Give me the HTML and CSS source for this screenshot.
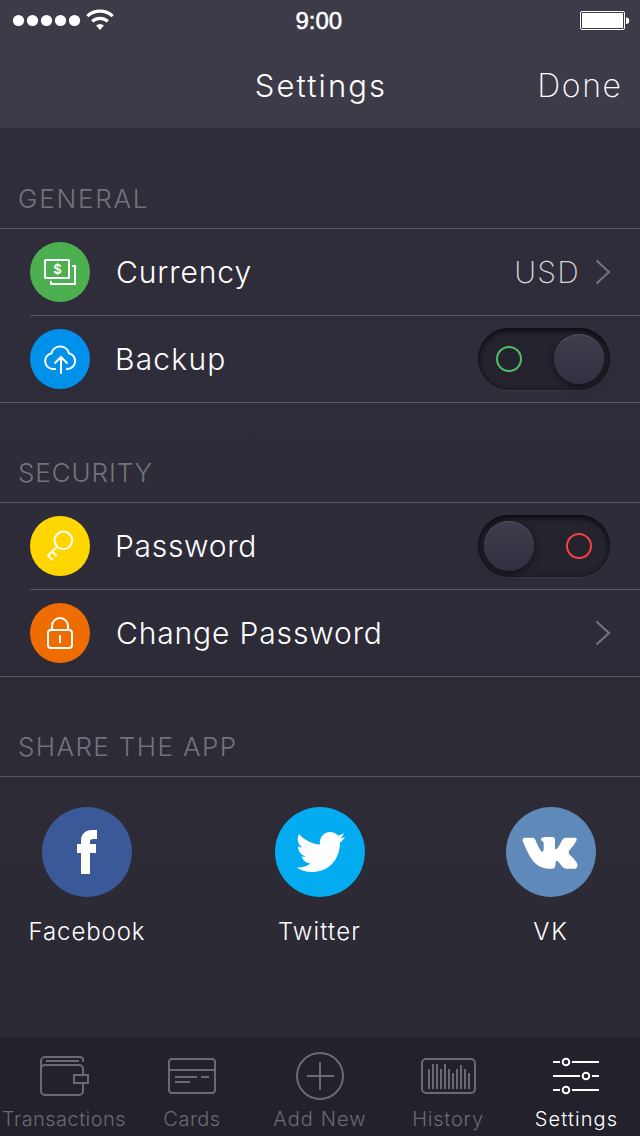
FILE: index.html
```html
<!DOCTYPE html>
<html lang="en">
<head>
<meta charset="utf-8">
<title>Settings</title>
<link rel="stylesheet" href="styles.css">
</head>
<body>
<div class="screen">
  <header class="header">
    <div class="status">
      <svg class="signal" width="108" height="24" viewBox="0 0 108 24" fill="#fff">
        <circle cx="6.5" cy="12.5" r="5.6"/><circle cx="20.5" cy="12.5" r="5.6"/><circle cx="34.5" cy="12.5" r="5.6"/><circle cx="48.5" cy="12.5" r="5.6"/><circle cx="62.5" cy="12.5" r="5.6"/>
        <g fill="none" stroke="#fff" stroke-width="3.2"><path d="M75.3 8.2a18.5 18.5 0 0 1 25.4 0"/><path d="M80.2 13.4a11.5 11.5 0 0 1 15.6 0"/></g>
        <path d="M84.1 17.4a5.8 5.8 0 0 1 7.8 0L88 22z"/>
      </svg>
      <span class="time">9:00</span>
      <svg class="battery" width="50" height="20" viewBox="0 0 50 20">
        <rect x=".5" y=".5" width="44" height="18" rx="1.5" fill="none" stroke="#fff"/>
        <rect x="2" y="2" width="41" height="15" rx=".5" fill="#fff"/>
        <path d="M46 6.500a3 3 0 0 1 0 6.500z" fill="#fff"/>
      </svg>
    </div>
    <div class="navbar">
      <h1 class="title">Settings</h1>
      <span class="done">Done</span>
    </div>
  </header>

  <main class="content">
    <section class="group">
      <h2 class="heading general">GENERAL</h2>
      <div class="row">
        <svg class="badge green" viewBox="0 0 60 60"><rect x="15" y="18" width="24" height="18" rx=".5"/><path d="M42 24h3v18H21v-3"/><text class="dollar" x="27.400" y="31.500">$</text></svg>
        <div class="cell">
          <span class="label currency">Currency</span>
          <span class="value">USD</span>
          <svg class="chevron" viewBox="0 0 16 26"><path d="M1.500 1.500 14 13 1.500 24.500"/></svg>
        </div>
      </div>
      <div class="row">
        <svg class="badge blue" viewBox="0 0 60 60"><path d="M26 40h-3.500A8 8 0 0 1 21.500 24.200a9 9 0 0 1 17.400 0A8 8 0 0 1 37.500 40H36M31 44.700V28M24.500 34.500 31 28l6.500 6.500"/></svg>
        <div class="cell">
          <span class="label backup">Backup</span>
          <span class="toggle on"><i class="ring"></i><i class="knob"></i></span>
        </div>
      </div>
    </section>

    <section class="group">
      <h2 class="heading security">SECURITY</h2>
      <div class="row">
        <svg class="badge yellow" viewBox="0 0 60 60"><circle cx="33.400" cy="24.400" r="8.800"/><path d="M27.200 30.600 18 39.400l4.700 4.700M22.300 35.500l4.200 4.500"/></svg>
        <div class="cell">
          <span class="label password">Password</span>
          <span class="toggle off"><i class="knob"></i><i class="ring"></i></span>
        </div>
      </div>
      <div class="row">
        <svg class="badge orange" viewBox="0 0 60 60"><rect x="18" y="27" width="24" height="18" rx="3"/><path d="M22 27v-4a8 8 0 0 1 16 0v4M30 32v8"/></svg>
        <div class="cell">
          <span class="label change">Change Password</span>
          <svg class="chevron" viewBox="0 0 16 26"><path d="M1.500 1.500 14 13 1.500 24.500"/></svg>
        </div>
      </div>
    </section>

    <section class="group">
      <h2 class="heading share">SHARE THE APP</h2>
      <div class="socials">
        <div class="social">
          <svg class="disc facebook" viewBox="0 0 90 90"><path d="M39 67V46h-4v-9h4v-3c0-7 4-11 11-11h5v9h-4c-2 0-3 1-3 3v2h6v9h-6v21z"/></svg>
          <span class="name fb-name">Facebook</span>
        </div>
        <div class="social">
          <svg class="disc twitter" viewBox="0 0 90 90"><path d="M24 27c5 6 13 10 21 10.500-1-7 4-12.500 10-12.500 3.500 0 6 1.500 8 3.500 2-.3 4-1.200 6-2.500-.8 2.300-2 3.800-3.500 5 1.500 0 3-.4 4.500-1-1 2-2.700 3.700-5 5.500C65 51 55 65 37.500 65 31.500 65 26 63.500 21.700 60.500c5.300.4 10-1 14-4-4.500-.4-8-3-9-7 1.500.2 3 .2 4.200-.2-5-1.300-8-5-7.800-9.800 1.400.7 2.700 1.200 4.200 1.200C22.500 37 21.700 32 24 27z"/></svg>
          <span class="name tw-name">Twitter</span>
        </div>
        <div class="social">
          <svg class="disc vk" viewBox="0 0 90 90"><path transform="translate(-46 -17) scale(.33333)" d="M188 149q0-6 6-6h24q6 0 8 6 5 14 13 28 5 9 8 9 4-1 4-10v-14q0-9-9-11 1-10 15-10h19q9 0 9 8v25q1 7 6 2 8-9 15-25 4-8 10-8h28q9 1 5 9-7 14-20 28-6 7 0 14 12 10 20 22 8 12-2 20h-28q-8 0-14-8-6-9-12-14-5-4-6 3l-1 10q0 9-11 9-26 3-46-13-16-14-26-37-12-24-15-34z"/></svg>
          <span class="name vk-name">VK</span>
        </div>
      </div>
    </section>
  </main>

  <nav class="tabs">
    <div class="tab">
      <svg class="glyph" viewBox="0 0 60 50"><path d="M7 19v-8a4 4 0 0 1 4-4h35a3 3 0 0 1 3 3v2M12 11h33M49 25v-6a4 4 0 0 0-4-4H11a4 4 0 0 0-4 4v22a4 4 0 0 0 4 4h34a4 4 0 0 0 4-4v-8M40 25h14v8H40z"/></svg>
      <span class="caption transactions">Transactions</span>
    </div>
    <div class="tab">
      <svg class="glyph" viewBox="0 0 60 50"><rect x="7" y="9" width="46" height="34" rx="3"/><path d="M7 20h46M13 27h22M39 27h8M13 32h15"/></svg>
      <span class="caption cards">Cards</span>
    </div>
    <div class="tab">
      <svg class="glyph" viewBox="0 0 60 50"><circle cx="30" cy="26" r="23"/><path d="M30 12v28M17 26h27"/></svg>
      <span class="caption add">Add New</span>
    </div>
    <div class="tab">
      <svg class="glyph" viewBox="0 0 60 50"><rect x="4" y="9" width="53" height="34" rx="4"/><path d="M11 19v20M15 14v25M19 14v25M23 19v20M27 14v25M31 19v20M35 23v16M39 19v20M43 15v24M47 19v20M51 23v16"/></svg>
      <span class="caption history">History</span>
    </div>
    <div class="tab active">
      <svg class="glyph" viewBox="0 0 60 50"><path d="M7 12h7M26 12h27M7 26h27M46 26h7M7 40h7M26 40h27"/><circle cx="20" cy="12" r="3.300"/><circle cx="40" cy="26" r="3.300"/><circle cx="20" cy="40" r="3.300"/></svg>
      <span class="caption settings">Settings</span>
    </div>
  </nav>
</div>
</body>
</html>
```
FILE: styles.css
```css
* { box-sizing: border-box; }
body { margin: 0; font-family: Inter, "Open Sans", sans-serif; color: #fff; }
h1, h2 { margin: 0; font-weight: 400; }
svg { display: block; flex: none; }

.screen {
  width: 640px;
  height: 1136px;
  display: flex;
  flex-direction: column;
  overflow: hidden;
  background: linear-gradient(#302e3b, #2b2a35 85%);
}

.header { height: 128px; background: #3d3b48; }
.status {
  height: 40px;
  padding: 0 10px 0 12px;
  display: grid;
  grid-template-columns: 108px 1fr 50px;
  align-items: center;
}
.signal { margin-bottom: 1px; }
.time {
  font: 24px/40px "Liberation Sans", sans-serif;
  -webkit-text-stroke: .5px #fff;
  padding: 1px 0 0 175.500px;
}
.battery { margin-top: 1px; }
.navbar {
  height: 88px;
  padding: 0 19px;
  display: grid;
  grid-template-columns: 1fr auto 1fr;
  align-items: center;
  line-height: 40px;
}
.title { grid-column: 2; font-size: 31px; font-weight: 350; padding-top: 3px; letter-spacing: 2.100px; margin-right: -2px; }
.done { justify-self: end; font-size: 32px; font-weight: 200; padding-top: 3px; letter-spacing: 1.600px; margin-right: -1.600px; }

.content { flex: 1; }
.heading {
  height: 100px;
  padding: 54px 0 0 18px;
  border-bottom: 1px solid #575661;
  font-size: 26px;
  font-weight: 300;
  line-height: 32px;
  color: #74737c;
}
.general { height: 101px; padding-top: 55px; letter-spacing: 1.800px; }
.security { letter-spacing: .900px; }
.share { letter-spacing: 1.400px; }

.row { height: 87px; padding-left: 30px; display: flex; align-items: flex-start; }
.row:last-child { border-bottom: 1px solid #575661; }
.row:not(:last-child) .cell::after {
  content: "";
  position: absolute;
  inset: auto 0 0 -60px;
  border-bottom: 1px solid #575661;
}
.cell {
  position: relative;
  flex: 1;
  height: 87px;
  padding: 0 29px 1px 26px;
  display: flex;
  align-items: center;
}
.badge {
  width: 60px;
  height: 60px;
  margin-top: 13px;
  border-radius: 50%;
  fill: none;
  stroke: #fff;
  stroke-width: 2;
}
.green { background: #4caf50; }
.blue { background: #0091ea; }
.yellow { background: #ffd600; }
.orange { background: #ef6c00; }
.dollar { font-size: 13px; font-weight: 600; text-anchor: middle; fill: #fff; stroke: none; }
.label { margin-right: auto; font-size: 30px; font-weight: 350; line-height: 40px; }
.currency { letter-spacing: .900px; }
.backup { letter-spacing: 1.200px; margin-left: -1px; }
.password { letter-spacing: .700px; margin-left: -1px; }
.change { letter-spacing: .860px; }
.value { font-size: 30px; font-weight: 200; color: #d6d5da; letter-spacing: 1.300px; margin-right: 15px; }
.chevron { width: 16px; height: 26px; fill: none; stroke: #777680; stroke-width: 2; }

.toggle {
  width: 132px;
  height: 62px;
  padding: 0 6px;
  border-radius: 31px;
  display: flex;
  align-items: center;
  justify-content: space-between;
  background: #25242e;
  box-shadow: inset 0 3px 5px #0d0d13, inset 0 0 4px #15151c, 0 1px 1px #3d3b4c;
}
.cell .toggle { margin-right: 1px; }
.knob {
  width: 50px;
  height: 50px;
  border-radius: 50%;
  background: linear-gradient(#3f3d4c, #322f40);
  box-shadow: inset 0 1px 1px #514f5f, 0 3px 7px #111118;
}
.ring { width: 26px; height: 26px; margin: 0 12px; border: 2px solid; border-radius: 50%; }
.on .ring { border-color: #4fbf67; }
.off .ring { border-color: #f8423f; }

.socials { padding: 30px 0 0; display: grid; grid-template-columns: 174px 291px 171px; }
.social { display: flex; flex-direction: column; align-items: center; }
.disc { width: 90px; height: 90px; border-radius: 50%; fill: #fff; }
.facebook { background: #3b5998; }
.twitter { background: #03abf0; }
.vk { background: #5f89b9; }
.name { margin-top: 20px; font-size: 24px; font-weight: 350; line-height: 30px; }
.fb-name { letter-spacing: .900px; }
.tw-name { letter-spacing: 1.150px; }
.vk-name { letter-spacing: 2px; margin-right: -1px; }

.tabs {
  height: 98px;
  padding-top: 12px;
  display: grid;
  grid-template-columns: repeat(5, 128px);
  background: #22212c;
}
.tab { display: flex; flex-direction: column; align-items: center; color: #6b6a72; }
.active { color: #fff; }
.glyph { width: 60px; height: 50px; fill: none; stroke: currentColor; stroke-width: 2; }
.caption { margin-top: 7px; font-size: 20px; font-weight: 350; line-height: 24px; white-space: nowrap; }
.transactions { letter-spacing: .450px; }
.cards { letter-spacing: .500px; }
.add { letter-spacing: 1.100px; }
.history { letter-spacing: .800px; }
.settings { letter-spacing: 1.100px; margin-right: -1px; }
```
